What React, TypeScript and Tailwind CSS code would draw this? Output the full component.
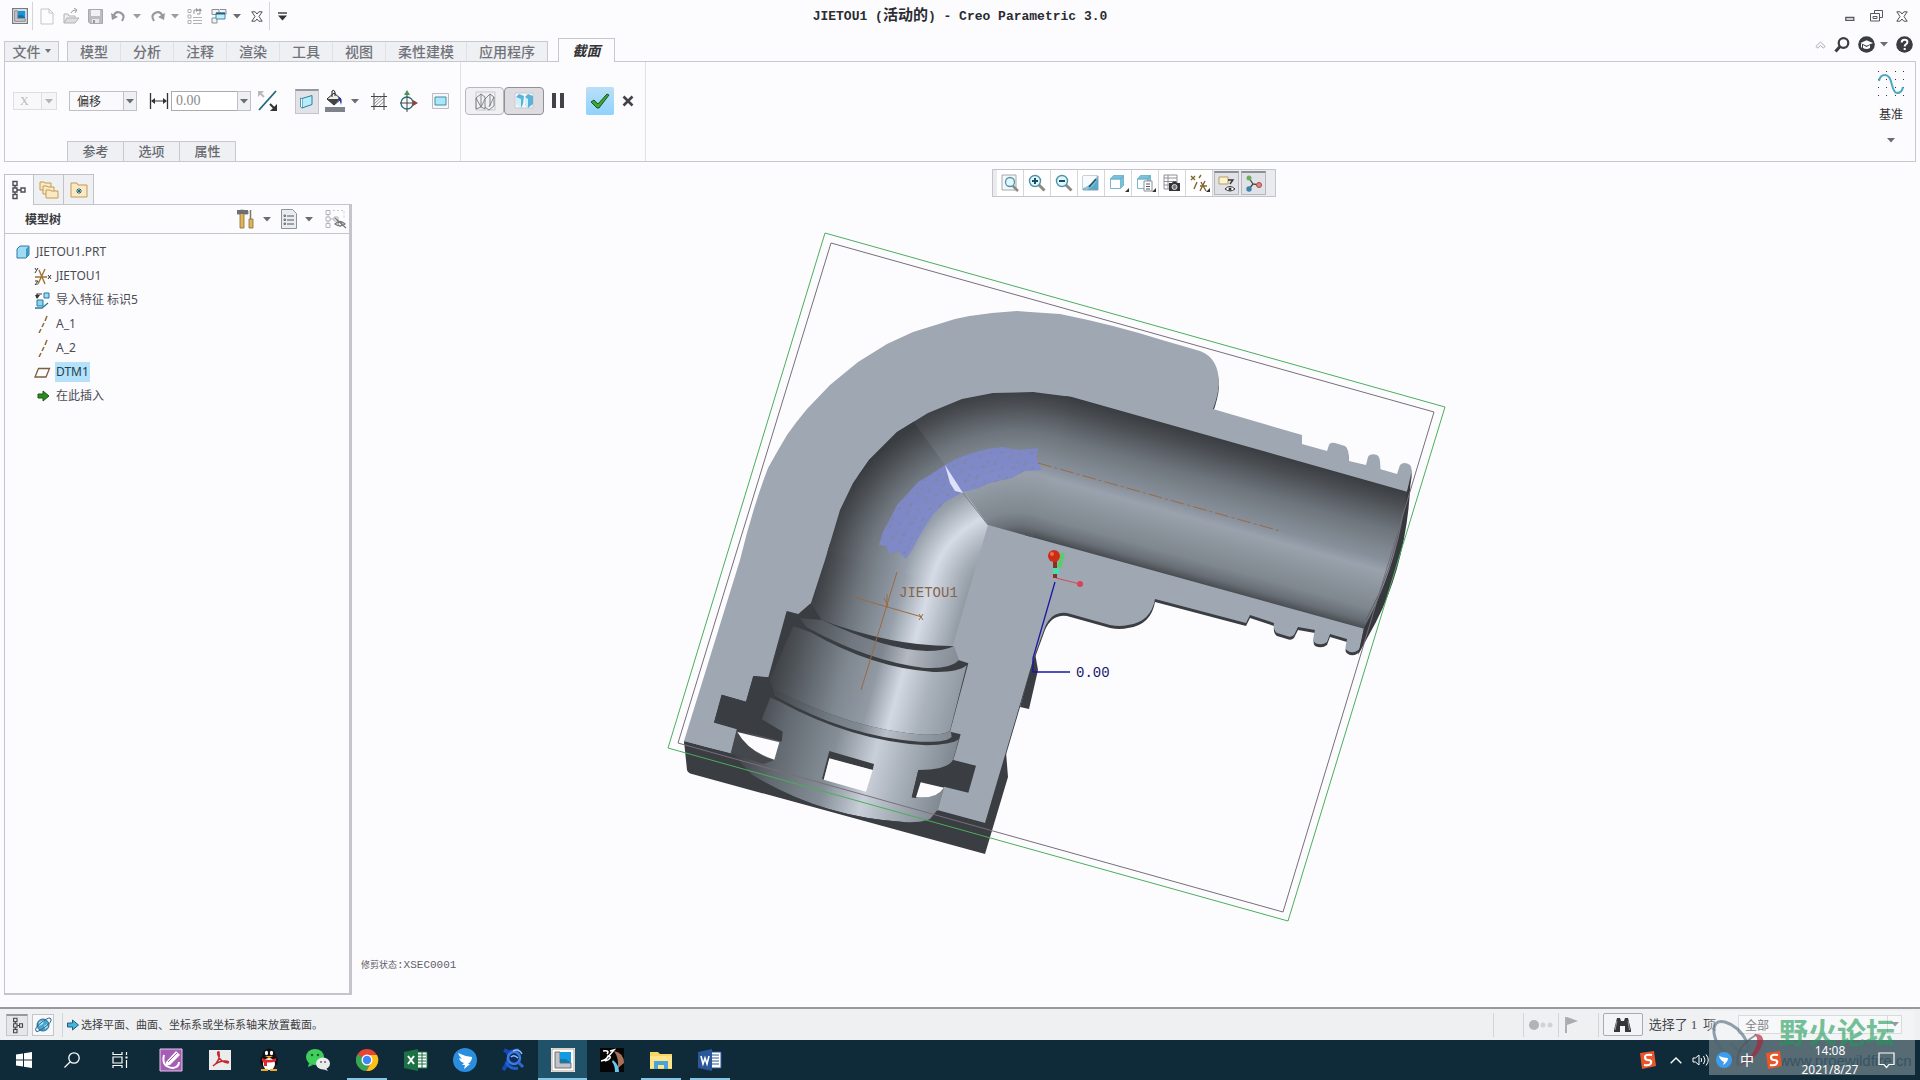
import type { ReactNode } from "react"

const menus = ["模型", "分析", "注释", "渲染", "工具", "视图", "柔性建模", "应用程序"]
const paineis = ["参考", "选项", "属性"]

interface IconProps {
  w?: number
  h?: number
  box?: string
  children: ReactNode
}

function Svg({ w = 20, h = 20, box, children }: IconProps) {
  return (
    <svg width={w} height={h} viewBox={box ?? `0 0 ${w} ${h}`} fill="none" className="shrink-0" aria-hidden="true">
      {children}
    </svg>
  )
}

function Caret({ color = "#6b6d72" }: { color?: string }) {
  return (
    <Svg w={8} h={5}>
      <path d="M0 0h8L4 4.5z" fill={color} />
    </Svg>
  )
}

function Btn({ label, className = "", children }: { label: string; className?: string; children: ReactNode }) {
  return (
    <button type="button" aria-label={label} className={`flex shrink-0 items-center justify-center ${className}`}>
      {children}
    </button>
  )
}

function CreoIcon({ size = 16 }: { size?: number }) {
  return (
    <Svg w={size} h={size} box="0 0 24 24">
      <path d="M1 1h22v22H1z" fill="#fff" stroke="#777a80" strokeWidth="2" />
      <path d="M4 4h4v12h12v4H4z" fill="#c9ccd2" stroke="#555" />
      <path d="M9 4h11v11H9z" fill="#1b93d3" />
      <path d="M9 11v4h11l-4-4z" fill="#176b9e" />
    </Svg>
  )
}

function Cube() {
  return (
    <>
      <path d="M1.500 5l3-3.500h10v10l-3 3h-10z" fill="#74c3e0" />
      <path d="M1.500 5h10v9.500h-10z" fill="#fdfeff" stroke="#78b7cc" />
      <path d="M1.500 5l3-3.500h10L11.500 5zM11.500 5l3-3.500v10l-3 3" stroke="#6aa9c0" strokeWidth=".8" />
    </>
  )
}

function TreeGlyph({ color = "#4b4d52" }: { color?: string }) {
  return (
    <Svg w={14} h={20}>
      <g stroke={color} strokeWidth="1.400">
        <path d="M1 1.500h4v4H1zM1 8h4v4H1zM1 14.500h4v4H1zM9 8h4v4H9zM3 5.500V8M3 12v2.500M5 10h4" />
      </g>
    </Svg>
  )
}

function TitleBar() {
  return (
    <header className="grid h-8 shrink-0 grid-cols-[1fr_auto_1fr] items-center">
      <div className="flex items-center pl-3">
        <CreoIcon />
        <span className="ml-1 h-7 w-px bg-[#d3d5da]" />
        <Btn label="新建" className="ml-1.5 w-4">
          <Svg w={14} h={17}><path d="M1 1h8l4 4v11H1zM9 1v4h4" fill="#fdfdfd" stroke="#c3c5c9" /></Svg>
        </Btn>
        <Btn label="打开" className="ml-1.5 w-5">
          <Svg w={18} h={17}>
            <path d="M2 15V6h4l1 2h6v2" fill="#eee" stroke="#b2b3b6" />
            <path d="M2 15l3-5h12l-4 5z" fill="#ddd" stroke="#b2b3b6" />
            <path d="M9 5q1-3 5-3M12 0l3 2-2 3" stroke="#999" />
          </Svg>
        </Btn>
        <Btn label="保存" className="ml-1 w-5">
          <Svg w={15} h={15}><path d="M.5.5h14v14H2l-1.500-1.500z" fill="#bcbdc0" stroke="#a8a9ac" /><path d="M3 1h9v6H3z" fill="#f1f1f3" /><path d="M4 10h7v4H4z" fill="#e8e8ea" /><path d="M5 11h2v3H5z" fill="#999" /></Svg>
        </Btn>
        <Btn label="撤消" className="ml-1 w-5">
          <Svg w={16} h={14}><path d="M2 8Q4 2 9 3.500 15 6 11 12" stroke="#97989c" strokeWidth="2.200" /><path d="M0 4l1 7 6-3z" fill="#97989c" /></Svg>
        </Btn>
        <span className="ml-1"><Caret color="#9b9ca0" /></span>
        <Btn label="重做" className="ml-1.5 w-5">
          <Svg w={16} h={14}><path d="M14 8Q12 2 7 3.500 1 6 5 12" stroke="#97989c" strokeWidth="2.200" /><path d="M16 4l-1 7-6-3z" fill="#97989c" /></Svg>
        </Btn>
        <span className="ml-1"><Caret color="#9b9ca0" /></span>
        <Btn label="重新生成" className="ml-1.5 w-5">
          <Svg w={16} h={16}>
            <path d="M1 1.500h3v3H1zM1 7h3v3H1zM1 12.500h3v3H1z" stroke="#b0b1b4" />
            <path d="M6 9.500h9M6 12.500h9M6 15.500h9" stroke="#b0b1b4" />
            <path d="M7 6V2h3M13 1v5h-3" stroke="#96979a" /><path d="M9 0l3 2-3 2zM15 3l-2-3-2 3z" fill="#96979a" />
          </Svg>
        </Btn>
        <Btn label="窗口" className="ml-1 w-5">
          <Svg w={16} h={16}>
            <path d="M1 1.500h7v5H1zM9 1.500h6v5M1 10h5v5H1z" stroke="#8b8d92" fill="#f3f3f6" />
            <path d="M5 5h9v6H5z" fill="#c9edf8" stroke="#3b8fae" /><path d="M5 5.500h9" stroke="#23647f" strokeWidth="2" />
          </Svg>
        </Btn>
        <span className="ml-1"><Caret /></span>
        <Btn label="关闭窗口" className="ml-1.5 w-5"><CloseGlyph /></Btn>
        <span className="ml-0.5 h-7 w-px bg-[#d3d5da]" />
        <Btn label="自定义" className="ml-1 w-4">
          <Svg w={9} h={9}><path d="M0 1h9" stroke="#444" strokeWidth="1.500" /><path d="M0 3.500h9L4.500 8.500z" fill="#333" /></Svg>
        </Btn>
      </div>
      <h1 className="pt-0.5 font-['Liberation_Mono','Noto_Sans_CJK_SC',monospace] text-[13px] font-bold whitespace-pre text-[#2b2c30]">
        JIETOU1 (<span className="text-[15px]">活动的</span>) - Creo Parametric 3.0
      </h1>
      <div className="flex items-center justify-end gap-2.5 pr-2.5">
        <Btn label="最小化" className="w-4"><Svg w={10} h={9}><path d="M.8 5.500h8v3h-8z" stroke="#56585d" strokeWidth="1.300" /></Svg></Btn>
        <Btn label="还原" className="w-4">
          <Svg w={13} h={12}><path d="M4.500 3.500v-3h8v7h-3" stroke="#56585d" /><path d="M.5 3.500h9v7.500h-9z" stroke="#56585d" /><path d="M3 6.500h4v2H3z" stroke="#56585d" /></Svg>
        </Btn>
        <Btn label="关闭" className="w-4"><CloseGlyph /></Btn>
      </div>
    </header>
  )
}

function CloseGlyph() {
  return (
    <Svg w={12} h={11}>
      <path d="M.8.8h3.400L6 3l1.800-2.200h3.400L8 5.500l3.200 4.700H7.800L6 8l-1.800 2.200H.8L4 5.500z" stroke="#505257" />
    </Svg>
  )
}

function MenuTabs() {
  const aba = "h-5 border border-b-0 border-[#c6c8cd] bg-[#eef0f3]"
  return (
    <nav className="flex h-[29px] shrink-0 items-end px-1 font-['Noto_Sans_CJK_SC',sans-serif] text-sm font-medium text-[#717379]">
      <button type="button" className={`${aba} flex w-[55px] items-center justify-center gap-1 pb-0.5 leading-none`}>
        文件<Svg w={6} h={4}><path d="M0 0h6L3 4z" fill="#717379" /></Svg>
      </button>
      <div className={`${aba} ml-2 flex items-center`}>
        {menus.map((item) => (
          <button key={item} type="button" className="h-full border-r border-[#dfe1e5] px-3 pb-0.5 leading-none last:border-r-0">
            {item}
          </button>
        ))}
      </div>
      <button type="button" className="relative -mb-px ml-2.5 h-6 w-[57px] border border-b-0 border-[#c6c8cd] bg-[#fcfcff] pb-0.5 leading-none font-bold text-[#333] italic">
        截面
      </button>
      <div className="mb-2 ml-auto flex items-center pr-0.5">
        <Btn label="折叠功能区" className="w-4"><Svg w={11} h={8}><path d="M.8 5.500L5.500 1l4.700 4.500-2 1.500-2.700-2.500L2.800 7z" stroke="#aaabb0" /></Svg></Btn>
        <Btn label="搜索" className="ml-1 w-5"><Svg w={16} h={16}><circle cx="9.500" cy="6" r="4.800" stroke="#3c3d41" strokeWidth="2.200" /><path d="M6 9.500L1.500 14.500" stroke="#3c3d41" strokeWidth="3" /></Svg></Btn>
        <Btn label="学习中心" className="ml-1 w-5">
          <Svg w={17} h={17}><circle cx="8.500" cy="8.500" r="8.300" fill="#3c3d41" /><path d="M2.500 7l6-2.800L15 7l-6.500 2.700z" fill="#fff" /><path d="M5 9v3q3.500 2 7 0V9L8.500 11z" fill="#fff" /><path d="M3.500 7.500v4" stroke="#fff" /></Svg>
        </Btn>
        <span className="ml-1"><Caret /></span>
        <Btn label="帮助" className="ml-1.5 w-5">
          <Svg w={17} h={17}><circle cx="8.500" cy="8.500" r="8.300" fill="#3c3d41" /><path d="M5.700 6.500q0-2.700 2.800-2.700 2.900 0 2.900 2.300 0 1.400-1.500 2.200Q8.700 9 8.700 10.500M8.700 12v2" stroke="#fff" strokeWidth="2" /></Svg>
        </Btn>
      </div>
    </nav>
  )
}

function Ribbon() {
  const caixa = "flex h-[18px] w-4 items-center justify-center border border-[#bfc1c6] bg-[#eff0f3]"
  return (
    <section className="mx-1 flex h-[101px] shrink-0 border border-[#c6c8cd]">
      <div className="flex w-[456px] flex-col border-r border-[#dfe1e5] pt-[25px]">
        <div className="flex h-7 items-center">
          <label className="relative ml-2 flex w-11 items-center opacity-50">
            <select aria-label="方向" disabled className="h-[18px] w-full appearance-none border border-[#bfc1c6] bg-[#f6f6f8] pl-1.5 font-['Liberation_Serif',serif] text-xs leading-none text-[#777]">
              <option>X</option>
            </select>
            <span className={`${caixa} pointer-events-none absolute right-0`}><Caret /></span>
          </label>
          <label className="relative ml-3 flex w-[68px] items-center">
            <select aria-label="类型" className="h-[20px] w-full appearance-none border border-[#bfc1c6] bg-[#fafafc] pl-[7px] font-['Noto_Sans_CJK_SC',sans-serif] text-xs leading-none text-[#333]">
              <option>偏移</option>
            </select>
            <span className="pointer-events-none absolute right-0 flex h-[20px] w-[14px] items-center justify-center border border-[#bfc1c6] bg-[#eff0f3]"><Caret /></span>
          </label>
          <span className="ml-3">
            <Svg w={20} h={20}><path d="M1.500 2v16M18.500 2v16" stroke="#333" strokeWidth="1.300" /><path d="M3 10h14" stroke="#333" /><path d="M2 10l4-3v6zM18 10l-4-3v6z" fill="#333" /></Svg>
          </span>
          <div className="ml-0.5 flex w-20 items-center">
            <input aria-label="偏移距离" defaultValue="0.00" className="h-[20px] w-0 flex-1 border border-[#a9abb0] bg-white pl-1 font-['Liberation_Serif',serif] text-sm leading-none text-[#8a8a8a]" />
            <Btn label="历史值" className="-ml-px h-[20px] w-[14px] border border-[#bfc1c6] bg-[#eff0f3]"><Caret /></Btn>
          </div>
          <Btn label="反向" className="ml-1.5">
            <Svg w={20} h={22}><path d="M19 1L2 20" stroke="#1e6878" strokeWidth="1.800" /><path d="M1 1h6L1 7z" fill="#b9b9bb" /><path d="M3 3l4 4" stroke="#b9b9bb" strokeWidth="2" /><path d="M20 21h-7l7-7z" fill="#333" /><path d="M18 19l-5-5" stroke="#333" strokeWidth="2" /></Svg>
          </Btn>
          <Btn label="加顶盖" className="ml-[18px] h-[25px] w-6 border border-t-2 border-[#c4c5ca] border-t-[#97989d] bg-[#e2e3e8]">
            <Svg w={16} h={16}><path d="M3 4.500l10-3v9l-10 3.500z" fill="#b7ecfa" stroke="#2c7f9b" /><path d="M3 4.500L1.500 4v9L3 14" fill="#fff" stroke="#2c7f9b" strokeWidth=".8" /></Svg>
          </Btn>
          <Btn label="颜色" className="ml-1.5">
            <Svg w={20} h={24}><path d="M2 10l7-6 7 6-7 6z" fill="#eee" stroke="#222" /><path d="M2 10h13l-6 6z" fill="#444" /><path d="M7 8V2q2-2 3 1v4" stroke="#222" /><path d="M14 8q4 1 2 8-1-5-3-7z" fill="#2434a3" /><path d="M0 18h20v5H0z" fill="#7e828a" /></Svg>
          </Btn>
          <span className="ml-1.5"><Caret /></span>
          <Btn label="剖面线" className="ml-3">
            <Svg w={16} h={17}><path d="M3 0v17M13 0v17M0 3.500h16M0 13.500h16" stroke="#444" /><path d="M3 8l5-4.500M3 11l8-7.500M4 13l9-8M8 13l5-4.500" stroke="#777" strokeWidth=".8" /></Svg>
          </Btn>
          <Btn label="自由定位" className="ml-3">
            <Svg w={20} h={22}><circle cx="8" cy="13" r="6" stroke="#2b6f78" strokeWidth="1.300" /><path d="M8 5v17M1 13h14" stroke="#444" /><path d="M8 0l3 5H5z" fill="#4a9358" /><path d="M19 13l-5-3v6z" fill="#993d37" /></Svg>
          </Btn>
          <Btn label="2D 视图" className="ml-[13px]">
            <Svg w={17} h={16}><path d="M.5.500h16v15H.5z" stroke="#babcc2" fill="#f5f6f9" /><path d="M3 4h11v8H3z" fill="#a8e8fa" stroke="#4b8ba0" /></Svg>
          </Btn>
        </div>
        <div className="mt-auto ml-[62px] flex border-l border-[#c6c8cd] font-['Noto_Sans_CJK_SC',sans-serif] text-[13px] font-medium text-[#66686e]">
          {paineis.map((item) => (
            <button key={item} type="button" className="h-5 w-14 border-t border-r border-[#c6c8cd] bg-[#eef0f3] pb-0.5 leading-none">{item}</button>
          ))}
        </div>
      </div>
      <div className="flex w-[185px] border-r border-[#dfe1e5] pt-[25px] pl-1">
        <div className="flex h-7 items-center">
          <Btn label="无预览" className="h-7 w-[39px] rounded-sm border border-[#b6b8bd] bg-[#f0f0f3]">
            <Svg w={22} h={20}><path d="M2 1h19v18H2z" stroke="#c9c9cc" /><path d="M2 7l5-4 4 3v12l-4-2-5 2zM11 8l5-5 4 3v9l-5 4-4-3M2 7l5 9M7 3v12M16 3v12M11 8l-4 8M20 6l-5 10" stroke="#6a6c71" strokeWidth=".8" /></Svg>
          </Btn>
          <Btn label="预览" className="h-7 w-10 rounded-sm border border-[#8f9197] bg-[#dcdce1]">
            <Svg w={22} h={18}><path d="M2 1h18v15H2z" fill="#f5f6f8" stroke="#c9c9cc" /><path d="M3 5l3-3 5 2-1 8-2 4z" fill="#5bb3da" /><path d="M3 5l5 2v9l-5-4z" fill="#cdf0fb" /><path d="M12 5l3-3 5 2v8l-5 4-3-4z" fill="#5bb3da" /><path d="M12 5l3 2v9l-3-4z" fill="#cdf0fb" /></Svg>
          </Btn>
          <Btn label="暂停" className="ml-1 w-5"><Svg w={12} h={16}><path d="M0 0h4v15H0zM8 0h4v15H8z" fill="#424347" /></Svg></Btn>
          <Btn label="确定" className="ml-[18px] h-7 w-7 rounded-xs bg-linear-to-b from-[#b9dff7] to-[#8fd2fb]">
            <Svg w={20} h={17}><path d="M1 9l3-2 4 4L17 1l2 1L9 15H7z" fill="#3da53a" stroke="#17591b" /></Svg>
          </Btn>
          <Btn label="取消" className="ml-2 w-3"><Svg w={12} h={12}><path d="M1.500 1.500l9 9M10.500 1.500l-9 9" stroke="#424347" strokeWidth="2.600" /></Svg></Btn>
        </div>
      </div>
      <button type="button" className="mr-1.5 ml-auto flex w-9 flex-col items-center pt-1.5 font-['Noto_Sans_CJK_SC',sans-serif] text-xs text-[#333]">
        <Svg w={28} h={30}>
          <g fill="#333">
            {[3, 11, 19, 27].map((y) => [1, 9, 18, 26].map((x) => <path key={`${x}-${y}`} d={`M${x} ${y}h1v1h-1z`} />))}
          </g>
          <path d="M2 13Q3 7 8 7q5 0 7 10 2 8 5 8 5 0 6-6" stroke="#4ea6bf" strokeWidth="2" />
        </Svg>
        <span className="mt-2">基准</span>
        <span className="mt-4"><Caret /></span>
      </button>
    </section>
  )
}

interface Linha {
  nome: string
  icone: ReactNode
  ativo?: boolean
}

const eixo = <path d="M13 1l-2 5M10 8l-2 4M7 14l-2 4" stroke="#8a6b38" strokeWidth="1.500" />

const linhas: Linha[] = [
  {
    nome: "JIETOU1",
    icone: (
      <>
        <path d="M1 10h12M4 17L11 2M5 3l6 14" stroke="#9a7433" strokeWidth="1.400" />
        <path d="M1 1l1.500 2.500L4 1M2.500 3.500L1 6M14 8l3 4M17 8l-3 4M1 14h3l-3 4h3" stroke="#333" />
      </>
    ),
  },
  {
    nome: "导入特征 标识5",
    icone: (
      <>
        <path d="M10 2h5v5h-5z" fill="#9adcf2" stroke="#277899" /><path d="M3 9h6v6H3z" fill="#8ad4ee" stroke="#277899" />
        <path d="M1 17h7l6-5" stroke="#277899" strokeWidth="1.300" /><path d="M8 3H3v4" stroke="#333" strokeWidth="1.200" /><path d="M1 4l2 4 3-4z" fill="#333" />
      </>
    ),
  },
  { nome: "A_1", icone: eixo },
  { nome: "A_2", icone: eixo },
  { nome: "DTM1", ativo: true, icone: <path d="M4.500 5.500h11L12 14H1z" stroke="#7a6040" strokeWidth="1.300" /> },
  { nome: "在此插入", icone: <path d="M4 7h5V4l6 5-6 5v-3H4z" fill="#2a8b1f" stroke="#195c14" /> },
]

function ModelTree() {
  const pasta = "fill-[#fbe9c4] stroke-[#c39a55]"
  return (
    <aside className="mb-3 ml-1 flex w-[348px] shrink-0 flex-col pt-3">
      <div className="flex">
        <Btn label="模型树" className="relative -mb-px h-[31px] w-[30px] border border-b-0 border-[#c0c2c8] bg-[#fcfcff]"><TreeGlyph /></Btn>
        <Btn label="文件夹浏览器" className="h-[30px] w-[30px] border-t border-r border-[#c0c2c8] bg-[#eef0f3]">
          <Svg w={20} h={20}><path className={pasta} d="M1 2h4l1 1h6v7H1z" /><path className={pasta} d="M4 6h4l1 1h6v7H4z" /><path className={pasta} d="M7 10h4l1 1h7v7H7z" /></Svg>
        </Btn>
        <Btn label="收藏夹" className="h-[30px] w-[30px] border-t border-r border-[#c0c2c8] bg-[#eef0f3]">
          <Svg w={18} h={16}><path className={pasta} d="M1 1h6l1 2h9v12H1z" /><path d="M9 6v6M6 9h6M7 7l4 4M11 7l-4 4" stroke="#21687f" /></Svg>
        </Btn>
      </div>
      <div className="flex flex-1 flex-col border border-r-3 border-b-2 border-[#c3c5ca]">
        <div className="flex h-[29px] items-center border-b border-[#c3c5ca] pr-0.5 pl-5">
          <h2 className="font-['Noto_Sans_CJK_SC',sans-serif] text-xs font-bold text-[#3a3a3e]">模型树</h2>
          <Btn label="设置" className="ml-auto">
            <Svg w={18} h={20}><path d="M0 2q4-2 11 0v3H7v14H3V5H0z" fill="#e0b45f" stroke="#8a6a2f" strokeWidth=".8" /><path d="M0 1h11v4H0z" fill="#6b6f76" /><path d="M13.500 1v9" stroke="#777" strokeWidth="1.500" /><path d="M12 10h4v9h-4z" fill="#e0b45f" stroke="#8a6a2f" strokeWidth=".8" /></Svg>
          </Btn>
          <span className="ml-2"><Caret /></span>
          <Btn label="显示" className="ml-2.5">
            <Svg w={16} h={20}><path d="M.5.500h11l4 4v15H.500z" fill="#e9edf2" stroke="#8e939b" /><path d="M6 7h7M6 11h7M6 15h7" stroke="#555" /><path d="M3 6h1.500v1.500H3zM3 10h1.500v1.500H3zM3 14h1.500v1.500H3z" stroke="#555" strokeWidth=".8" /></Svg>
          </Btn>
          <span className="ml-2"><Caret /></span>
          <Btn label="隐藏" className="ml-3">
            <Svg w={22} h={20}>
              <path d="M1 1.500h4v4H1zM1 8h4v4H1zM1 14.500h4v4H1zM9 8h4v4H9zM3 5.500V8M3 12v2.500M5 10h4" stroke="#b3b4b8" />
              <path d="M8 1.500h11v8" stroke="#c9cacd" strokeDasharray="2 2" />
              <path d="M10 15q5-5 10 0-5 4-10 0zM10 9l11 10" stroke="#777" strokeWidth="1.200" /><circle cx="15" cy="15" r="2" stroke="#777" />
            </Svg>
          </Btn>
        </div>
        <ul className="pt-1.5 font-['Noto_Sans','Noto_Sans_CJK_SC',sans-serif] text-xs text-[#4b4b52]">
          <li className="flex h-6 items-center pl-[11px]">
            <Svg w={14} h={14}><path d="M1 4l3-3h9v9l-3 3H1z" fill="#9fdcf4" stroke="#2c7ba0" /><path d="M10 4l3-3v9l-3 3z" fill="#3c9ac4" /></Svg>
            <span className="ml-1.5">JIETOU1.PRT</span>
          </li>
          {linhas.map((item) => (
            <li key={item.nome} className="flex h-6 items-center pl-[29px]">
              <Svg w={18} h={18}>{item.icone}</Svg>
              <span className={item.ativo ? "ml-[3px] bg-[#b3e2fa] px-px py-0.5 text-[#23404f]" : "ml-1"}>{item.nome}</span>
            </li>
          ))}
        </ul>
      </div>
    </aside>
  )
}

const lupa = (
  <>
    <path d="M10.500 10.500l6 6" stroke="#8e8a84" strokeWidth="3" />
    <circle cx="7" cy="7" r="5.500" fill="#e3f6fb" stroke="#4d93a8" strokeWidth="1.400" />
  </>
)

const ferramentas: { nome: string; ativo?: boolean; menu?: boolean; icone: ReactNode }[] = [
  { nome: "重新调整", icone: <><path d="M1 1h14v15H1z" fill="#f4f6f9" stroke="#a6a8ae" /><path d="M12 12l5 5" stroke="#8e8a84" strokeWidth="2.500" /><circle cx="9" cy="8" r="4.500" fill="#e3f6fb" stroke="#4d93a8" strokeWidth="1.300" /></> },
  { nome: "放大", icone: <>{lupa}<path d="M4 7h6M7 4v6" stroke="#164e63" strokeWidth="2" /></> },
  { nome: "缩小", icone: <>{lupa}<path d="M4 7h6" stroke="#164e63" strokeWidth="2" /></> },
  { nome: "重画", icone: <><path d="M1 2h15v14H1z" fill="#8cc4d8" stroke="#8aa6b1" /><path d="M1 2h14Q12 10 1 14z" fill="#f8fbfd" /><path d="M16 4v12H5Q12 13 16 4z" fill="#5ba9c5" /><path d="M14 5l-7 8" stroke="#1d5a73" strokeWidth="1.800" /></> },
  { nome: "显示样式", menu: true, icone: <Cube /> },
  { nome: "已保存方向", menu: true, icone: <><Cube /><path d="M8 7h8v10H8z" fill="#fff" stroke="#8d9097" /><path d="M10 10h4M10 12.500h4M10 15h4" stroke="#555" /></> },
  { nome: "视图管理器", icone: <><path d="M1 1h13v14H1zM1 4h13M1 7.500h13M1 11h6M5 1v14" stroke="#8d9097" /><path d="M6 9h3l1-1.500h3L14 9h3v8H6z" fill="#333" /><circle cx="11.500" cy="13" r="2.500" fill="#777" stroke="#ddd" /></> },
  { nome: "基准显示过滤器", menu: true, icone: <><path d="M1 2l4 4M5 2L1 6M11 1L9 4M7 8l-3 7M10 12h7M10 17l5-10M11 8l5 9" stroke="#80672f" strokeWidth="1.400" /></> },
  { nome: "注释显示", ativo: true, icone: <><path d="M1 2h9v7H1z" fill="#fdf3cf" stroke="#b59f62" /><path d="M10 5h5l-3 4" stroke="#333" strokeWidth="1.300" /><path d="M7 14q5-5 10 0-5 4-10 0z" fill="#fff" stroke="#333" /><circle cx="12" cy="14" r="1.500" fill="#333" /></> },
  { nome: "旋转中心", ativo: true, icone: <><path d="M4 3l4 6 6 1M8 9l-4 5" stroke="#444" strokeWidth="1.300" /><circle cx="4" cy="3" r="2.500" fill="#6cad5f" /><circle cx="14" cy="10" r="2.500" fill="#e08383" stroke="#a24b4b" /><circle cx="4" cy="14" r="2.700" fill="#3d83a9" /></> },
]

function ViewToolbar() {
  return (
    <div className="relative mt-[7px] mr-1 flex h-7 border border-[#c3c5ca] bg-[#eaebef] pr-2 pl-1">
      {ferramentas.map((item) => (
        <Btn
          key={item.nome}
          label={item.nome}
          className={item.ativo ? "relative m-px w-[25px] border border-t-2 border-[#b5b7bc] border-t-[#8d8f95] bg-[#e1e2e7]" : "relative w-[27px] border-r border-[#d4d6da] bg-white"}
        >
          <Svg w={18} h={18}>{item.icone}</Svg>
          {item.menu && <span className="absolute right-0.5 bottom-1"><Svg w={4} h={4}><path d="M4 0v4H0z" fill="#333" /></Svg></span>}
        </Btn>
      ))}
    </div>
  )
}

const face =
  "M684 741L740 560Q752 510 768 468Q778 450 787 435Q796 422 807 409L830 385L858 362L887 344L913 332L955 319Q973 315 992 313L1017 311L1030 312L1060 314Q1115 325 1162 340L1200 351Q1219 358 1219 384Q1218 396 1213 409L1302 435V444L1327 451L1329 445Q1330 442 1335 443L1345 446Q1349 448 1349 461L1366 465L1368 457Q1370 453 1377 455Q1381 457 1380 469L1397 474L1400 465Q1404 461 1410 465Q1413 468 1411 478L1407 492L1364 628L1360 648Q1357 653 1350 652Q1344 650 1346 645L1347 639L1330 634L1327 642Q1322 646 1315 643Q1312 640 1315 630L1298 627L1294 635Q1291 638 1287 636L1277 633Q1273 630 1274 623L1250 615L1246 623L1155 599Q1151 622 1128 625Q1120 627 1110 625L1067 613Q1052 611 1045 627L1033 660L985 823Z"

const bore =
  "M811 603L825 560L840 510L853 483L869 460L897 432L928 413L962 399L993 393L1033 392L1072 397L1408 492Q1404 560 1365 629L988 525L953 645L900 652L811 630Z"

const faixa =
  "M879 545L883 532L892 515L897 505L910 491L918 482L930 475L945 465L958 458L973 453L987 449L1003 447L1020 450L1038 448L1036 458L1042 470L1025 471L1012 478L990 483L979 488L963 492L945 502L932 516L920 535L912 550L906 559L898 551L890 554L886 546Z"

function Modelo() {
  return (
    <svg viewBox="352 162 1568 845" className="absolute inset-0 h-full w-full" role="img" aria-label="JIETOU1">
      <defs>
        <linearGradient id="tubo" gradientUnits="userSpaceOnUse" x1="1240" y1="444" x2="1201" y2="584">
          <stop offset="0" stopColor="#393c40" />
          <stop offset=".1" stopColor="#4a4e53" />
          <stop offset=".3" stopColor="#6f767d" />
          <stop offset=".5" stopColor="#87909a" />
          <stop offset=".58" stopColor="#9aa3ad" />
          <stop offset=".68" stopColor="#8f97a0" />
          <stop offset=".85" stopColor="#7f878f" />
          <stop offset=".94" stopColor="#686e75" />
          <stop offset="1" stopColor="#484c51" />
        </linearGradient>
        <radialGradient id="curva" gradientUnits="userSpaceOnUse" cx="1017" cy="593" r="204">
          <stop offset=".289" stopColor="#50555a" />
          <stop offset=".333" stopColor="#6b7178" />
          <stop offset=".396" stopColor="#7f878f" />
          <stop offset=".517" stopColor="#8f97a0" />
          <stop offset=".588" stopColor="#98a1ab" />
          <stop offset=".645" stopColor="#87909a" />
          <stop offset=".787" stopColor="#6f767d" />
          <stop offset=".929" stopColor="#4a4e53" />
          <stop offset="1" stopColor="#393c40" />
        </radialGradient>
        <radialGradient id="curvaClara" gradientUnits="userSpaceOnUse" cx="1019" cy="600" r="203">
          <stop offset=".2" stopColor="#848c95" />
          <stop offset=".31" stopColor="#a6aeb8" />
          <stop offset=".44" stopColor="#d6dce6" />
          <stop offset=".58" stopColor="#97a0aa" />
          <stop offset=".655" stopColor="#87909a" />
          <stop offset=".78" stopColor="#6f767d" />
          <stop offset=".93" stopColor="#4a4e53" />
          <stop offset="1" stopColor="#393c40" />
        </radialGradient>
        <linearGradient id="descida" gradientUnits="userSpaceOnUse" x1="815" y1="579" x2="968" y2="622">
          <stop offset="0" stopColor="#393c40" />
          <stop offset=".093" stopColor="#4a4e53" />
          <stop offset=".28" stopColor="#6f767d" />
          <stop offset=".44" stopColor="#87909a" />
          <stop offset=".54" stopColor="#97a0aa" />
          <stop offset=".71" stopColor="#d6dce6" />
          <stop offset=".88" stopColor="#a6aeb8" />
          <stop offset="1" stopColor="#848c95" />
        </linearGradient>
        <linearGradient id="soquete" gradientUnits="userSpaceOnUse" x1="400" y1="330" x2="965" y2="486">
          <stop offset="0" stopColor="#3b3e42" />
          <stop offset=".12" stopColor="#4e5358" />
          <stop offset=".38" stopColor="#7f8790" />
          <stop offset=".54" stopColor="#9199a3" />
          <stop offset=".67" stopColor="#d3d9e2" />
          <stop offset=".82" stopColor="#aab2bc" />
          <stop offset="1" stopColor="#8e96a0" />
        </linearGradient>
        <linearGradient id="anel" gradientUnits="userSpaceOnUse" x1="290" y1="600" x2="910" y2="770">
          <stop offset="0" stopColor="#3b3e42" />
          <stop offset=".2" stopColor="#626970" />
          <stop offset=".45" stopColor="#858e97" />
          <stop offset=".64" stopColor="#c9cfd8" />
          <stop offset=".78" stopColor="#a9b1bb" />
          <stop offset="1" stopColor="#7f8790" />
        </linearGradient>
        <clipPath id="furo"><path d={bore} /></clipPath>
        <pattern id="ruido" width="23" height="19" patternUnits="userSpaceOnUse" patternTransform="rotate(-38)">
          <path d="M2 3l6 1-3 2zM13 8l7-1-5 3zM5 14l3-2 5 1zM17 16h4l-2 2zM11 1l2 2-3 1z" fill="#7b8694" />
        </pattern>
      </defs>

      <g fill="#3a3d42">
        <path d={face} transform="translate(0 3)" />
        <path d="M684 741L687 770Q688 773 692 774L985 854L1008 777L1006 752L985 820Z" />
        <path d="M1035 653L1038 670L1029 709L1020 707Z" />
      </g>
      <path d={face} fill="#9fa7b2" />

      <g clipPath="url(#furo)">
        <path d="M1070 379L1420 480V660L1000 620Z" fill="url(#tubo)" />
        <path d="M780 350H1085L1072 397L1033 537L1022 577L988 525L945 465L860 480Z" fill="url(#curva)" />
        <path d="M780 530L1010 590V700H780Z" fill="url(#descida)" />
        <path d="M872 364L945 465L988 525L1002 600L780 539V400Z" fill="url(#curvaClara)" />
      </g>
      <path d="M1364 628Q1398 565 1407 492L1411 474Q1408 560 1376 622L1358 655Z" fill="#36383d" />
      <path d="M1402 512Q1394 570 1366 620" stroke="#5b6067" fill="none" />

      <path d={faixa} fill="#8088cd" opacity=".9" />
      <path d={faixa} fill="url(#ruido)" opacity=".8" />
      <path d="M945 465L950 483L955 491L963 493Z" fill="#dde2fa" />
      <path d="M963 493L988 525" stroke="#767e88" />

      {/* socket, drawn at three times its size */}
      <g transform="translate(640 540) scale(.33333)">
        <path d="M512 190L475 222L440 213L385 412L340 408L318 485L245 464L222 548L290 568L272 638L890 820L912 740L985 758L1008 677L940 660L962 583L930 575L985 370L955 360L940 318Q760 320 545 240Z" fill="#3a3d42" />
        <path d="M480 235L545 240Q740 330 860 333Q915 333 942 318L957 360Q930 388 850 383Q690 365 500 262Z" fill="url(#soquete)" />
        <path d="M480 235L545 240Q740 330 860 333Q915 333 942 318L957 360Q930 388 850 383Q690 365 500 262Z" fill="#3a3d42" opacity=".2" />
        <path d="M460 258L512 277Q700 385 880 396Q955 398 980 376L930 572Q915 585 850 584Q640 570 400 448L390 420Z" fill="url(#soquete)" />
        <path d="M400 448Q640 570 850 584Q915 585 932 572L935 590Q920 608 840 605Q620 590 405 468Z" fill="url(#soquete)" />
        <path d="M400 448Q640 570 850 584Q915 585 932 572L935 590Q920 608 840 605Q620 590 405 468Z" fill="#3a3d42" opacity=".16" />
        <path d="M385 470L415 483Q640 605 860 616Q935 614 956 598L940 658Q925 690 835 690L815 772Q890 778 912 745L890 822Q870 850 790 846Q540 830 335 704L272 638L290 572L425 575L360 535Z" fill="url(#anel)" />
        <path d="M340 408L318 485L245 464L222 548L290 568L425 605L428 575L365 538Q378 505 390 475L385 412Z" fill="#3a3d42" />
        <path d="M290 568Q320 640 403 660L370 672L272 640Z" fill="#44484d" />
        <path d="M292 576L418 607L403 659Q325 635 292 576Z" fill="#fcfcff" />
        <path d="M568 633L702 672L698 690L568 656L552 719L546 717Z" fill="#3a3d42" />
        <path d="M568 655L698 690L678 755L551 719Z" fill="#fcfcff" />
        <path d="M835 690L912 742L840 727L828 774L816 772Z" fill="#3a3d42" />
        <path d="M842 727L912 743Q890 778 828 772Z" fill="#fcfcff" />
        <path d="M272 638L335 704Q540 830 790 846L780 870L160 700L140 610Z" fill="#3a3d42" />
        <path d="M133 603L272 640L290 568L222 548Z" fill="#9fa7b2" />
        <path d="M890 812L1035 850L1025 890L860 850Z" fill="#3a3d42" />
      </g>

      <g stroke="#9a6a43" fill="none">
        <path d="M1038 463L1280 531" strokeDasharray="14 3 3 3" />
        <path d="M853 597L922 617M897 572L861 690" />
        <path d="M884 598l4 8M887 594v14M919 614l4 6M923 614l-4 6" />
      </g>
      <path d="M825 233L1445 407L1288 921L668 748Z" fill="none" stroke="#4aae5c" />
      <path d="M831 243L1434 412L1283 912L678 743Z" fill="none" stroke="#786f78" />

      <g fill="none">
        <path d="M1055 582L1033 658V672H1070" stroke="#1717a5" strokeWidth="1.300" />
        <path d="M1056 578L1080 584" stroke="#d14d59" />
        <path d="M1063 553L1059 568" stroke="#56cf68" strokeWidth="4" />
        <path d="M1055 556V578" stroke="#8c3023" strokeWidth="4" />
      </g>
      <rect x="1053" y="568" width="6" height="6" fill="#46e0b4" />
      <circle cx="1054" cy="556" r="6" fill="#cd2e13" />
      <circle cx="1052" cy="554" r="2" fill="#ec6a4d" />
      <circle cx="1080" cy="584" r="3" fill="#dc4355" />

      <g className="font-['Liberation_Mono',monospace]">
        <text x="899" y="597" className="text-[14px]" fill="#85644d">JIETOU1</text>
        <text x="1076" y="677" className="text-[14px]" fill="#17176d">0.00</text>
      </g>
    </svg>
  )
}

function StatusBar() {
  const corte = "h-6 w-px bg-[#d2d4d8]"
  return (
    <footer className="flex h-[33px] shrink-0 items-center border-t-2 border-[#98999d] bg-[#eef0f2] pl-1.5 font-['Noto_Sans_CJK_SC',sans-serif]">
      <Btn label="导航器" className="h-[22px] w-[22px] border border-t-2 border-[#c4c5ca] border-t-[#97989d] bg-[#e6e7ea]"><Svg w={14} h={17} box="0 0 14 20"><path d="M3 1.500h4v4H3zM3 8h4v4H3zM3 14.500h4v4H3zM10 8h3.500v4H10zM5 5.500V8M5 12v2.500M7 10h3" stroke="#444" strokeWidth="1.300" /></Svg></Btn>
      <Btn label="浏览器" className="ml-1 h-[22px] w-[22px] border border-[#c4c5ca] bg-[#f8f8fa]">
        <Svg w={18} h={18}><circle cx="9" cy="9" r="6" fill="#48a5d2" stroke="#2b6e96" /><path d="M5 6l5-2-1 4-4 2zM10 10l3-2 1 3-3 2z" fill="#b9e5f6" /><path d="M2 15Q0 12 8 6q8-6 9-3 1 3-6 8-8 6-9 4z" stroke="#255f83" /></Svg>
      </Btn>
      <span className={`${corte} mr-1 ml-2`} />
      <Svg w={12} h={12}><path d="M.5 4h5V1l6 5-6 5V8h-5z" fill="#46b3dd" stroke="#1c5f7e" /></Svg>
      <p className="ml-0.5 text-[11px] text-[#3c3d42]">选择平面、曲面、坐标系或坐标系轴来放置截面。</p>
      <div className="ml-auto flex items-center pr-[18px]">
        <span className={corte} />
        <span className={`${corte} ml-[29px]`} />
        <span className="mx-1"><Svg w={26} h={12}><circle cx="6" cy="6" r="5" fill="#b2b3b7" /><circle cx="15" cy="6" r="2.500" fill="#d1d2d5" /><circle cx="22" cy="6" r="2.500" fill="#d1d2d5" /></Svg></span>
        <span className={corte} />
        <span className="mx-1.5"><Svg w={13} h={16}><path d="M1 0v16" stroke="#999a9e" strokeWidth="1.500" /><path d="M2 0l11 4-11 4z" fill="#aaabaf" /></Svg></span>
        <span className={`${corte} ml-3.5`} />
        <Btn label="查找" className="ml-1 h-[23px] w-10 rounded-xs border border-[#a9abb0] bg-[#f4f4f6]">
          <Svg w={17} h={16}><path d="M3 1h3l1 3h3l1-3h3l3 12v2h-6V9H6v6H0v-2z" fill="#35363a" /><path d="M3 4L1 13M14 4l1.500 9" stroke="#999" /></Svg>
        </Btn>
        <span className="ml-1.5 text-[13px] whitespace-pre text-[#46474c]">选择了 <span className="font-['Liberation_Serif',serif]">1</span>  项</span>
        <label className="relative ml-[22px] flex w-[164px] items-center">
          <select aria-label="选择过滤器" className="h-[19px] w-full appearance-none border border-[#c8cace] bg-[#f4f5f7] pl-1.5 text-xs leading-none text-[#4a4b50]">
            <option>全部</option>
          </select>
          <span className="pointer-events-none absolute right-0 flex h-[19px] w-[15px] items-center justify-center border border-[#c8cace]"><Caret /></span>
        </label>
      </div>
    </footer>
  )
}

const apps: { nome: string; linha?: string; ativo?: boolean; icone: ReactNode }[] = [
  { nome: "画笔", icone: <><path d="M1 1h22v22H1z" fill="#a65db5" stroke="#e6c8ec" /><path d="M5 7q-3 12 9 13 6-1 6-6" stroke="#fff" strokeWidth="2" /><path d="M7 14L17 3l4 4L11 17l-5 1z" fill="#fff" /><path d="M9 14l9-9" stroke="#a65db5" /></> },
  { nome: "PDF", icone: <><path d="M1 2h22v20H1z" fill="#ececec" /><path d="M5 18q8-6 6-14-2-1-1 3 2 7 10 8 2-2-3-2-7 0-12 5z" stroke="#c3282d" strokeWidth="1.400" /></> },
  { nome: "QQ", icone: <><ellipse cx="12" cy="13" rx="9" ry="8" fill="#111" /><ellipse cx="12" cy="7" rx="6.500" ry="6.500" fill="#111" /><ellipse cx="12" cy="16" rx="6" ry="6" fill="#fff" /><ellipse cx="9.500" cy="5" rx="1.600" ry="2.200" fill="#fff" /><ellipse cx="14.500" cy="5" rx="1.600" ry="2.200" fill="#fff" /><path d="M8 8h8l-4 2z" fill="#f5a623" /><path d="M5 10q7 4 14 0v3q-7 3-14 0zM7 13h3v5H7z" fill="#e0262c" /><path d="M4 21h7v2H4zM13 21h7v2h-7z" fill="#f5a623" /></> },
  { nome: "微信", icone: <><ellipse cx="9" cy="9" rx="9" ry="8" fill="#3fce5b" /><path d="M3 15l-1 4 5-2z" fill="#3fce5b" /><ellipse cx="17" cy="15.500" rx="7" ry="6" fill="#e9ebec" /><path d="M20 20l2 3-5-2z" fill="#e9ebec" /><g fill="#195d2c"><circle cx="6" cy="7" r="1.200" /><circle cx="12" cy="7" r="1.200" /></g><g fill="#666"><circle cx="15" cy="14" r="1" /><circle cx="19" cy="14" r="1" /></g></> },
  { nome: "Chrome", linha: "w-10", icone: <><circle cx="12" cy="12" r="11" fill="#e84436" /><path d="M12 12L2.500 6.500A11 11 0 0011 23l5-9z" fill="#35a654" /><path d="M12 7h10A11 11 0 0111.500 23L16.500 14z" fill="#fbc116" /><circle cx="12" cy="12" r="5.500" fill="#fff" /><circle cx="12" cy="12" r="4.200" fill="#4285f4" /></> },
  { nome: "Excel", icone: <><path d="M12 4h11v16H12z" fill="#fff" stroke="#1d7144" /><path d="M13 7h9M13 10h9M13 13h9M13 16h9M18 4v16" stroke="#1d7144" /><path d="M0 4l14-3v22L0 20z" fill="#1d7144" /><path d="M4 8l6 8M10 8l-6 8" stroke="#fff" strokeWidth="2" /></> },
  { nome: "钉钉", icone: <><circle cx="12" cy="12" r="12" fill="#2b8ddd" /><path d="M5 5q6 3 14 4 0 4-4 7h2l-6 5 1-4H9l2-2q-4-1-5-5l3 1Q6 8 5 5z" fill="#fff" /></> },
  { nome: "搜索工具", icone: <><path d="M2 2l6 3L5 16l-4 6M4 5l13-3" stroke="#1847b8" strokeWidth="4" /><circle cx="12" cy="10" r="6" fill="#0d2c61" stroke="#3a7be0" strokeWidth="2.500" /><path d="M16 14l5 5" stroke="#3167cd" strokeWidth="3" /><path d="M4 14q4 8 12 6" stroke="#1f5fd0" strokeWidth="3" /><path d="M9 9q3-3 7 1M11 3q6-3 9 3" stroke="#9cbcf0" strokeWidth="1.500" /></> },
  { nome: "Creo Parametric", linha: "w-full", ativo: true, icone: <><path d="M0 0h24v24H0z" fill="#fff" /><path d="M1 1h22v22H1z" stroke="#b9a798" /><path d="M4 4h5v11h11v5H4z" fill="#bfc2c7" stroke="#6d7076" /><path d="M9 4h11v11H9z" fill="#159be0" /><path d="M9 11v4h11l-5-4z" fill="#1876a9" /></> },
  { nome: "CATIA", icone: <><path d="M0 0h24v24H0z" fill="#050505" /><path d="M14 3q10 2 10 12l-6 5q1-10-4-17z" fill="#a87258" /><path d="M13 12q6 5 6 12h-4q0-7-3-10z" fill="#64c7ee" /><path d="M3 3q7-1 4 3M1 13q6-1 7-5 3 0 2 2t-5 3M10 3l4-1-6 7" stroke="#fff" strokeWidth="1.600" /></> },
  { nome: "文件资源管理器", linha: "w-10", icone: <><path d="M1 4h8l2 2h12v15H1z" fill="#f6d569" /><path d="M1 8h22v12H1z" fill="#ffe48c" /><path d="M5 21v-8h14v8h-4v-4H9v4z" fill="#48a5d6" /></> },
  { nome: "Word", linha: "w-10", icone: <><path d="M12 4h11v16H12z" fill="#fff" stroke="#2a579a" /><path d="M13 7h8M13 10h8M13 13h8M13 16h8" stroke="#2a579a" /><path d="M0 4l14-3v22L0 20z" fill="#2a579a" /><path d="M3 8l2 8 2-6 2 6 2-8" stroke="#fff" strokeWidth="1.600" /></> },
]

function Sogou() {
  return <Svg w={16} h={18}><path d="M0 2l14-2 2 15-14 3z" fill="#e8562a" /><path d="M12 4Q5 3 5 6t3 3q4 0 3 3t-7 2" stroke="#fff" strokeWidth="2.200" /></Svg>
}

function Taskbar() {
  return (
    <div className="flex h-10 shrink-0 items-center bg-[#0f2b39] text-white">
      <Btn label="开始" className="h-full w-12"><Svg w={16} h={16}><path d="M0 2.500L7 1.500V7.500H0zM8 1.300L16 0v7.500H8zM0 8.500h7v6L0 13.500zM8 8.500h8V16l-8-1.200z" fill="#fff" /></Svg></Btn>
      <Btn label="搜索" className="h-full w-12"><Svg w={16} h={16}><circle cx="10" cy="6" r="5.200" stroke="#fff" strokeWidth="1.300" /><path d="M6 10L.5 15.500" stroke="#fff" strokeWidth="1.300" /></Svg></Btn>
      <Btn label="任务视图" className="h-full w-12"><Svg w={16} h={16}><path d="M1 0v2.500h9V0M1 5h9v6H1zM1 16v-2.500h9V16M14.500 0v3M14.500 8v8" stroke="#fff" strokeWidth="1.200" /><path d="M13.500 4.500h2v2h-2z" fill="#fff" /></Svg></Btn>
      <div className="ml-0.5 flex h-full">
        {apps.map((item) => (
          <button key={item.nome} type="button" aria-label={item.nome} className={`relative flex w-[49px] items-center justify-center ${item.ativo ? "bg-[#20536a]" : ""}`}>
            <Svg w={24} h={24} box="0 0 24 24">{item.icone}</Svg>
            {item.linha && <span className={`absolute bottom-0 h-0.5 bg-[#87c7e4] ${item.linha}`} />}
          </button>
        ))}
      </div>
      <div className="relative z-10 ml-auto flex items-center font-['Noto_Sans','Noto_Sans_CJK_SC',sans-serif] text-xs">
        <Sogou />
        <Btn label="显示隐藏的图标" className="ml-2.5 w-5"><Svg w={12} h={7}><path d="M.7 6.300L6 1l5.300 5.300" stroke="#fff" strokeWidth="1.400" /></Svg></Btn>
        <Btn label="音量" className="ml-1 w-5"><Svg w={17} h={14}><path d="M1 5h2.500L7 2v10L3.500 9H1zM9 5q1.500 2 0 4M11.500 3q3 4 0 8M14 1.500q4.500 5.500 0 11" stroke="#fff" /></Svg></Btn>
        <span className="ml-1.5"><Svg w={16} h={16}><circle cx="8" cy="8" r="8" fill="#3d9ceb" /><path d="M3 4q5 2 9 2 0 4-5 7l1-3q-4-2-5-6z" fill="#fff" /></Svg></span>
        <span className="ml-2 text-sm leading-none">中</span>
        <span className="ml-3"><Sogou /></span>
        <time className="ml-3.5 w-[68px] text-center leading-[19px]">14:08<br />2021/8/27</time>
        <Btn label="通知" className="mr-6 ml-3 w-5"><Svg w={17} h={17}><path d="M1 1h15v11.500h-5L8.500 15.500 6 12.500H1z" stroke="#fff" strokeWidth="1.200" /></Svg></Btn>
      </div>
    </div>
  )
}

// forum stamp over the corner of the desktop
function ForumStamp() {
  return (
    <div className="pointer-events-none absolute right-[5px] bottom-[5px] flex h-16 w-[206px] items-center bg-white/30">
      <Svg w={64} h={60}>
        <path d="M26 45Q8 38 5 20 4 6 16 9q14 4 22 20 3 10-3 10-8-1-13-9" stroke="#4b6478" strokeWidth="3" opacity=".6" />
        <path d="M29 53q20-6 25-24 1-9-9-8 4 2 3 10-5 16-19 22z" fill="#ae1f39" opacity=".65" />
        <path d="M29 53q-4-18 18-31" stroke="#53555c" strokeWidth="2" opacity=".6" />
      </Svg>
      <div className="flex flex-col pl-1.5 opacity-60">
        <strong className="font-['Noto_Sans_CJK_SC',sans-serif] text-[29px] leading-9 font-bold text-[#1d9b58]">野火论坛</strong>
        <span className="font-['Liberation_Sans',sans-serif] text-[15px] leading-6 text-[#22465a]">www.proewildfire.cn</span>
      </div>
    </div>
  )
}

export default function App() {
  return (
    <div className="relative flex h-screen flex-col overflow-hidden bg-[#fcfcff]">
      <TitleBar />
      <MenuTabs />
      <Ribbon />
      <main className="flex min-h-0 flex-1">
        <ModelTree />
        <section className="relative flex min-w-0 flex-1 flex-col items-center">
          <Modelo />
          <ViewToolbar />
          <p className="relative mt-auto mb-[34px] self-start pl-[9px] font-['Liberation_Mono','Noto_Sans_CJK_SC',monospace] text-[11px] text-[#5f6065]">
            <span className="text-[9px]">修剪状态</span>:XSEC0001
          </p>
        </section>
      </main>
      <StatusBar />
      <Taskbar />
      <ForumStamp />
    </div>
  )
}
